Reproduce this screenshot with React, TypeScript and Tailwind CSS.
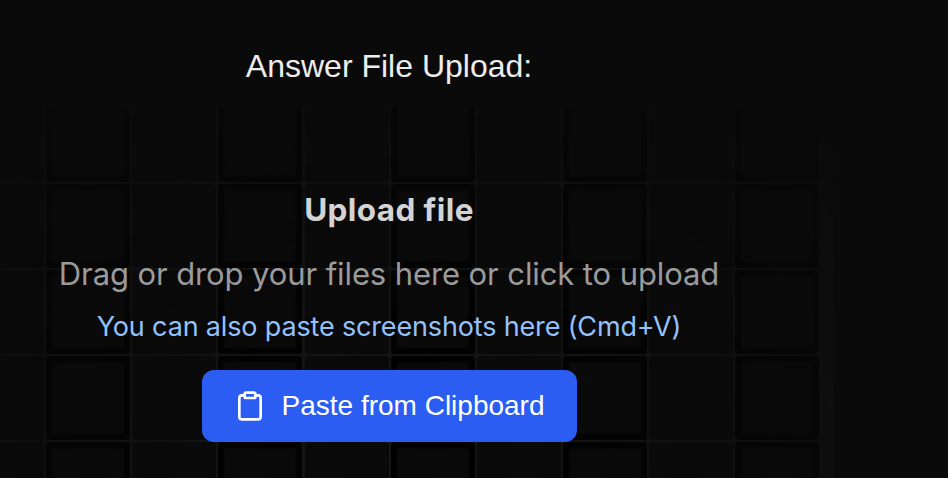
const COLUMNS = 11;
const ROWS = 9;

function GridPattern() {
  return (
    <div className="grid shrink-0 grid-cols-[repeat(11,84px)] auto-rows-[84px] gap-[2.1px]">
      {Array.from({ length: COLUMNS * ROWS }, (_, i) => (
        <div
          key={i}
          className={
            (i % COLUMNS) % 2 === 0
              ? "rounded-[4px] bg-neutral-950 shadow-[inset_0_0_2px_6px_#000]"
              : "rounded-[4px] bg-neutral-950"
          }
        />
      ))}
    </div>
  );
}

function ClipboardIcon() {
  return (
    <svg
      className="size-8 shrink-0"
      viewBox="0 0 24 24"
      fill="none"
      stroke="currentColor"
      strokeWidth="2"
      strokeLinecap="round"
      strokeLinejoin="round"
    >
      <rect x="8" y="2" width="8" height="4" rx="1" ry="1" />
      <path d="M16 4h2a2 2 0 0 1 2 2v14a2 2 0 0 1-2 2H6a2 2 0 0 1-2-2V6a2 2 0 0 1 2-2h2" />
    </svg>
  );
}

export default function App() {
  return (
    <main className="h-[478px] w-[948px] overflow-hidden bg-neutral-950 font-['Liberation_Sans',Arial,sans-serif]">
      <h2 className="flex h-[106px] w-[778px] items-center justify-center pt-[26px] text-[32px] leading-none text-[#ededed]">
        <span>Answer File Upload:</span>
      </h2>
      <section className="relative -ml-14 h-[680px] w-[890px] overflow-hidden">
        <div className="absolute inset-0 flex items-start justify-end overflow-hidden bg-neutral-900 pr-[15px] [mask-image:radial-gradient(ellipse_at_center,white,transparent)]">
          <div className="-mt-[8.2px] flex">
            <GridPattern />
          </div>
        </div>
        <div className="relative flex flex-col items-center pt-20">
          <p className="font-['Inter',sans-serif] text-[31.5px] leading-[48px] font-bold tracking-[0.4px] text-neutral-300">
            Upload file
          </p>
          <p className="mt-4 font-['Inter',sans-serif] text-[31px] leading-[48px] tracking-[-0.1px] text-[#9b9b9b]">
            Drag or drop your files here or click to upload
          </p>
          <p className="mt-[9px] font-['Inter',sans-serif] text-[27px] leading-[40px] tracking-[-0.16px] text-[#93c1fc]">
            You can also paste screenshots here (Cmd+V)
          </p>
          <button className="mt-[23px] flex h-[72px] w-[375px] items-center gap-4 rounded-xl bg-[#2b5df2] pl-8 text-[28px] text-white">
            <ClipboardIcon />
            <span>Paste from Clipboard</span>
          </button>
        </div>
      </section>
    </main>
  );
}
